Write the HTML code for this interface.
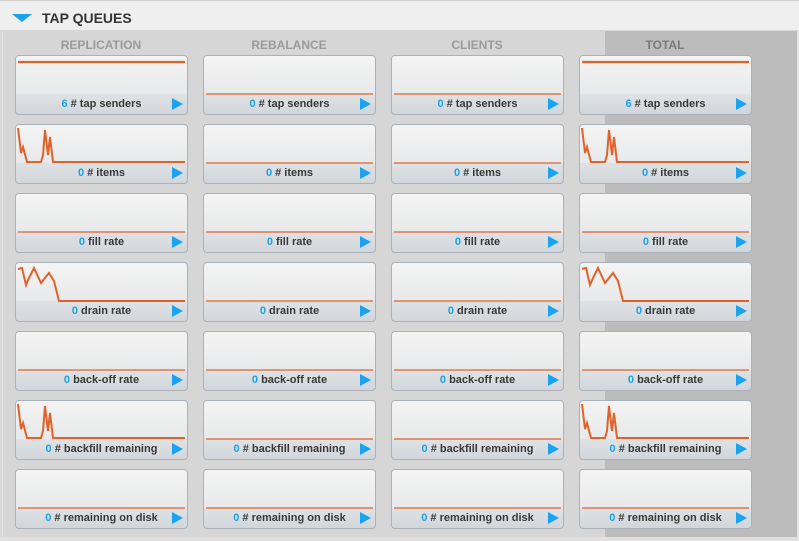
<!DOCTYPE html>
<html><head><style>
*{margin:0;padding:0;box-sizing:border-box}
body{width:799px;height:541px;overflow:hidden;background:#d6d6d6;font-family:"Liberation Sans",Arial,sans-serif;position:relative}
.hdr{position:absolute;left:0;top:0;width:799px;height:31px;background:#efefef;border-top:1px solid #d0d0d0;border-bottom:1px solid #d8d8d8}
.hdr .tri{position:absolute;left:12px;top:13px;width:0;height:0;border-left:10px solid transparent;border-right:10px solid transparent;border-top:8px solid #1aa3e6}
.hdr .t{position:absolute;left:42px;top:9px;font-size:14px;font-weight:bold;color:#333}
.edge{position:absolute;left:2px;top:31px;width:1px;height:510px;background:#e4e4e4}
.tot{position:absolute;left:605px;top:31px;width:192px;height:506px;background:#bcbcbc}
.redge{position:absolute;left:797px;top:31px;width:2px;height:510px;background:#e6e6e6}
.bedge{position:absolute;left:0;top:537px;width:799px;height:4px;background:#e0e0e0}
.ch{position:absolute;top:38px;width:172px;text-align:center;font-size:12px;font-weight:bold;color:#9a9a9a}
.ch.t{color:#7a7a7a}
.card{position:absolute;width:173px;height:60px;border:1px solid #a9b2ba;border-radius:4px;background:linear-gradient(#f4f4f4,#e8e9ea 65%,#dfe2e5 66%,#d2d6da);overflow:hidden}
.card svg{position:absolute;left:0;top:0}
.cap{position:absolute;left:0;right:0;top:42px;text-align:center;font-size:11px;font-weight:bold;color:#383838}
.cap b{color:#1ba1e2}
.arr{position:absolute;right:4px;top:42px;width:0;height:0;border-top:6px solid transparent;border-bottom:6px solid transparent;border-left:11px solid #1aa3f0}
</style></head><body>
<div class="hdr"><div class="tri"></div><div class="t">TAP QUEUES</div></div>
<div class="edge"></div><div class="tot"></div><div class="redge"></div><div class="bedge"></div>
<div class="ch" style="left:15px">REPLICATION</div>
<div class="ch" style="left:203px">REBALANCE</div>
<div class="ch" style="left:391px">CLIENTS</div>
<div class="ch t" style="left:579px">TOTAL</div>
<div id="g"></div>
<script>
var labels=["# tap senders","# items","fill rate","drain rate","back-off rate","# backfill remaining","# remaining on disk"];
var xs=[15,203,391,579],h="";
var spk="M2,3 L5,28 L7,22 L11,37 L25,37 L27,30 L29,5 L32,30 L34,12 L37,37 L169,37";
var drn="M2,6 L6,5 L10,22 L13,15 L18,5 L25,20 L33,10 L38,18 L43,38 L169,38";
for(var r=0;r<7;r++){for(var c=0;c<4;c++){
 var full=(c==0||c==3);var p,n="0";
 if(r==0){p=full?"M2,6 L169,6":"M2,38 L169,38";if(full)n="6";}
 else if((r==1||r==5)&&full)p=spk;
 else if(r==3&&full)p=drn;
 else p="M2,38 L169,38";
 var sw=(r==0&&full)?2.2:1.3;
 h+='<div class="card" style="left:'+xs[c]+'px;top:'+(55+r*69)+'px"><svg width="173" height="45"><path d="'+p+'" fill="none" stroke="#e0622a" stroke-width="'+((p==spk||p==drn)?2:sw)+'"/></svg><div class="cap"><b>'+n+'</b> '+labels[r]+'</div><div class="arr"></div></div>';
}}
document.getElementById("g").innerHTML=h;
</script>
</body></html>
